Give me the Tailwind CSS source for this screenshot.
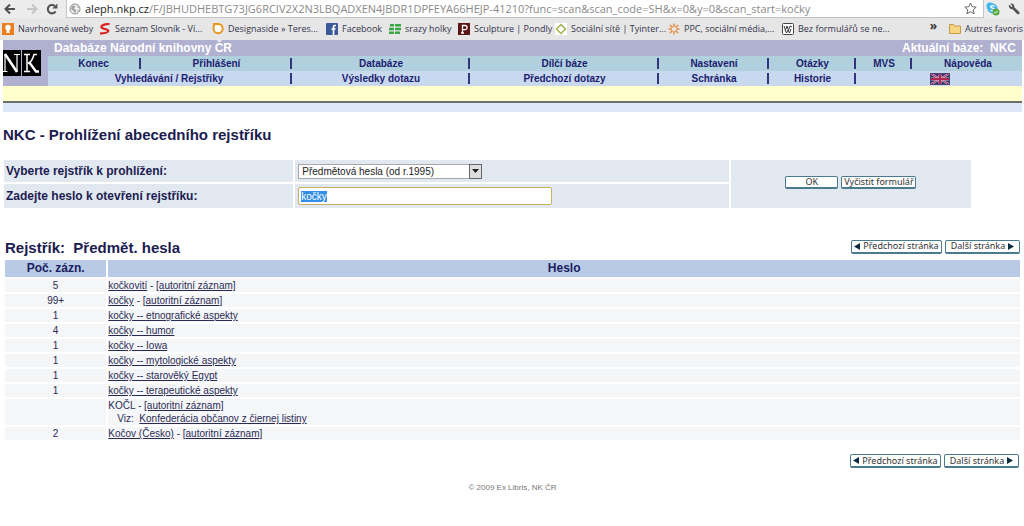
<!DOCTYPE html>
<html lang="cs">
<head>
<meta charset="utf-8">
<title>NKC - Prohlížení abecedního rejstříku</title>
<script src="https://cdn.jsdelivr.net/npm/@tailwindcss/browser@4"></script>
</head>
<body class="bg-white font-['Liberation_Sans',Arial,sans-serif] text-[10px] leading-3 text-[#2a2a55] overflow-x-hidden">

<!-- Browser toolbar -->
<header class="bg-[#e6e6e6] font-['Open_Sans','Noto_Sans',sans-serif]">
  <div class="flex h-[18px] items-center bg-[#ececec]">
    <button aria-label="Zpět" class="ml-1 w-[22px]"><svg class="size-3" viewBox="0 0 12 12" fill="none" stroke="#505050" stroke-width="2"><path d="M11 6H2M6 1.5 1.5 6 6 10.5"/></svg></button>
    <button aria-label="Vpřed" class="w-5"><svg class="size-3" viewBox="0 0 12 12" fill="none" stroke="#c4c4c4" stroke-width="2"><path d="M1 6h9M6 1.5 10.5 6 6 10.5"/></svg></button>
    <button aria-label="Obnovit" class="w-5"><svg class="size-3" viewBox="0 0 12 12"><path d="M9.600 8.400A4.200 4.200 0 1 1 8.800 3" fill="none" stroke="#505050" stroke-width="2"/><path d="M11.400.4v5H6.400z" fill="#505050"/></svg></button>
    <div class="flex h-[18px] min-w-0 flex-1 items-center border-x border-b border-[#c4c4c4] bg-white pl-[2px]">
      <svg class="size-3 shrink-0" viewBox="0 0 12 12"><circle cx="6" cy="6" r="5" fill="#f4f4f4" stroke="#8c8c8c"/><path d="M3 2.500 6.500 3 5 6l2.500 1L6 10.500 4.500 8 2 6zM8 2l2 2.500L8.500 5zM8 7.500l2-.5-1.500 2.500z" fill="#a4a4a4"/></svg>
      <p class="ml-1 min-w-0 flex-1 whitespace-nowrap text-[11px] leading-4 text-[#8a8a8a]"><span class="text-[#222]">aleph.nkp.cz</span>/F/JBHUDHEBTG73JG6RCIV2X2N3LBQADXEN4JBDR1DPFEYA66HEJP-41210?func=scan&amp;scan_code=SH&amp;x=0&amp;y=0&amp;scan_start=kočky</p>
      <button aria-label="Přidat záložku" class="mr-1.5"><svg class="size-[13px]" viewBox="0 0 13 13"><path d="m6.500 1 1.700 3.700 4 .4-3 2.700.9 4-3.600-2.100-3.600 2.100.9-4-3-2.700 4-.4z" fill="#fff" stroke="#666"/></svg></button>
    </div>
    <button aria-label="Skype" class="ml-0.5 w-[22px]"><svg class="size-[14px]" viewBox="0 0 14 14"><circle cx="4" cy="4" r="3.500" fill="#41b6e6"/><circle cx="6.500" cy="6.500" r="5" fill="#41b6e6"/><path d="M8.500 4.300C7 3 4.500 3.500 4.700 5s3.800 1 3.800 2.500S5.800 9.200 4.500 8" fill="none" stroke="#fff" stroke-width="1.300"/><circle cx="10" cy="10" r="3.500" fill="#5aa845"/><path d="m8.500 10 1 1.200 2-2.200" fill="none" stroke="#fff"/></svg></button>
    <button aria-label="Nastavení prohlížeče" class="w-4"><svg class="size-3" viewBox="0 0 12 12"><path d="M1 1.500 3.500 4 4.500 3 2.300.8C4.500 0 6.800 1.500 6.300 4.200l5 4.800c1 1.500-.8 3-2.200 2L4.600 6.200C2.500 6.800.2 4.500 1 1.500z" fill="#555"/></svg></button>
  </div>
  <nav aria-label="Záložky" class="flex h-[22px] items-center whitespace-nowrap text-[9px] text-[#34344c]">
    <a href="#" class="flex w-[96px] items-center gap-1 pl-[2px]"><svg class="size-3 shrink-0" viewBox="0 0 12 12"><rect width="12" height="12" fill="#ee7d1d"/><circle cx="6" cy="4.500" r="2.800" fill="#fff"/><path d="M4.500 6h3v4h-3z" fill="#fff"/></svg>Navrhované weby</a>
    <a href="#" class="flex w-[115px] items-center gap-1 pl-[3px]"><svg class="size-3 shrink-0" viewBox="0 0 12 12"><path d="M10.500 1C6 1 2 2.200 2.300 4.200S9.500 5.800 9.300 8 4.500 10.200 1 10.500" fill="none" stroke="#dc2020" stroke-width="2.200"/></svg>Seznam Slovník - Ví...</a>
    <a href="#" class="flex w-[113px] items-center gap-1 pl-[1px]"><svg class="size-3 shrink-0" viewBox="0 0 12 12"><path d="M2 1h4.500a4.600 4.600 0 1 1-5 5z" fill="#fff" stroke="#e8961e" stroke-width="2"/></svg>Designaside » Teres...</a>
    <a href="#" class="flex w-[63px] items-center gap-1 pl-[2px]"><svg class="size-3 shrink-0" viewBox="0 0 12 12"><rect width="12" height="12" rx="1" fill="#3b5998"/><path d="M10 2.500H8.800Q7.500 2.500 7.500 4v8M5.500 6h4" fill="none" stroke="#fff" stroke-width="1.700"/></svg>Facebook</a>
    <a href="#" class="flex w-[69px] items-center gap-1 pl-[2px]"><svg class="size-3 shrink-0" viewBox="0 0 12 12"><path d="M1 1h11v2.500H1zM0 4.700h12v2.500H0zM0 8.500h11V11H0z" fill="#3aa648"/><path d="M5.500 1v10" stroke="#e8f4e8"/></svg>srazy holky</a>
    <a href="#" class="flex w-[97px] items-center gap-1 pl-[2px]"><svg class="size-3 shrink-0" viewBox="0 0 12 12"><rect width="12" height="12" fill="#5c1414"/><path d="M4.500 10V2.500H7a2 2 0 0 1 0 4.200H4.500M3 10h3" fill="none" stroke="#fff" stroke-width="1.300"/></svg>Sculpture | Pondly</a>
    <a href="#" class="flex w-[113px] items-center gap-1 pl-[2px]"><svg class="size-3 shrink-0" viewBox="0 0 12 12"><rect width="12" height="12" fill="#fff"/><path d="m6 1.500 4.500 4.500L6 10.500 1.500 6z" fill="none" stroke="#a3b04c" stroke-width="1.500"/></svg>Sociální sítě | Tyinter...</a>
    <a href="#" class="flex w-[113px] items-center gap-1 pl-[2px]"><svg class="size-3 shrink-0" viewBox="0 0 12 12"><path d="M6 .5V4M6 8v3.500M.5 6H4M8 6h3.500M2 2l2.500 2.500M7.500 7.500 10 10M10 2 7.500 4.500M4.500 7.500 2 10" stroke="#e58a3c" stroke-width="1.500"/></svg>PPC, sociální média,...</a>
    <a href="#" class="flex items-center gap-1 pl-[3px]"><svg class="size-3 shrink-0" viewBox="0 0 12 12"><rect x=".5" y=".5" width="11" height="11" rx="1" fill="#fff" stroke="#444"/><path d="m2 3 1.500 4L5 3l1.500 4L8 3l2 1M3 7l1.500 3L6 7l1.500 3L9 6" fill="none" stroke="#333"/></svg>Bez formulářů se ne...</a>
    <button aria-label="Další záložky" class="ml-auto mr-3 pb-1.5 text-[12px] font-bold text-[#333]">»</button>
    <a href="#" class="flex items-center gap-1 pr-px"><svg class="size-3 shrink-0" viewBox="0 0 12 12"><path d="M.5 10.500v-9h4l1 1.500h6v7.500z" fill="#f6d583" stroke="#c49a45"/></svg>Autres favoris</a>
  </nav>
</header>

<div class="pl-[3px] pr-[2px]">
  <!-- Catalogue banner -->
  <div class="flex bg-[#b0b0d0]">
    <div class="w-[45px] shrink-0 pt-[10px]">
      <svg class="h-[26px] w-[38px]" viewBox="0 0 38 26" role="img" aria-label="NK"><path d="M0 0h18v26H0zM19 0h19v26H19z" fill="#000"/><g fill="none" stroke="#fff"><path d="M2 4v17M0 21.500h4.500M14 4v18M11 4.500h6" stroke-width="1.200"/><path d="m2 4 12 18" stroke-width="2.500"/><path d="M24 4v18M21 4.500h6M21 21.500h6M34 4.500h-3c-1 4-3.500 8-6 9" stroke-width="1.500"/><path d="m26 12 7 9.500h3" stroke-width="2.300"/></g></svg>
    </div>
    <div class="min-w-0 flex-1">
      <div class="flex h-4 items-center justify-between pl-1.5 pr-[6px] text-[12px] font-bold text-white"><span>Databáze Národní knihovny ČR</span><span>Aktuální báze:&nbsp; NKC</span></div>
      <nav aria-label="Hlavní nabídka" class="text-[10px] font-bold text-[#1c1c70]">
        <div class="grid h-[15px] grid-cols-[95fr_151fr_178fr_189fr_110fr_87fr_56fr_108fr] items-center bg-[#b0d0dd] text-center">
          <div class="flex items-center"><a href="#" class="flex-1">Konec</a><i class="mr-[2px] h-[11px] w-[2px] bg-[#34347c]"></i></div>
          <div class="flex items-center"><a href="#" class="flex-1">Přihlášení</a><i class="mr-[2px] h-[11px] w-[2px] bg-[#34347c]"></i></div>
          <div class="flex items-center"><a href="#" class="flex-1">Databáze</a><i class="mr-[2px] h-[11px] w-[2px] bg-[#34347c]"></i></div>
          <div class="flex items-center"><a href="#" class="flex-1">Dílčí báze</a><i class="mr-[2px] h-[11px] w-[2px] bg-[#34347c]"></i></div>
          <div class="flex items-center"><a href="#" class="flex-1">Nastavení</a><i class="mr-[2px] h-[11px] w-[2px] bg-[#34347c]"></i></div>
          <div class="flex items-center"><a href="#" class="flex-1">Otázky</a><i class="mr-[2px] h-[11px] w-[2px] bg-[#34347c]"></i></div>
          <div class="flex items-center"><a href="#" class="flex-1">MVS</a><i class="mr-[2px] h-[11px] w-[2px] bg-[#34347c]"></i></div>
          <a href="#">Nápověda</a>
        </div>
        <div class="grid h-[15px] grid-cols-[246fr_178fr_189fr_110fr_87fr_164fr] items-center bg-[#c8d8ee] text-center">
          <div class="flex items-center"><a href="#" class="flex-1">Vyhledávání / Rejstříky</a><i class="mr-[2px] h-[11px] w-[2px] bg-[#34347c]"></i></div>
          <div class="flex items-center"><a href="#" class="flex-1">Výsledky dotazu</a><i class="mr-[2px] h-[11px] w-[2px] bg-[#34347c]"></i></div>
          <div class="flex items-center"><a href="#" class="flex-1">Předchozí dotazy</a><i class="mr-[2px] h-[11px] w-[2px] bg-[#34347c]"></i></div>
          <div class="flex items-center"><a href="#" class="flex-1">Schránka</a><i class="mr-[2px] h-[11px] w-[2px] bg-[#34347c]"></i></div>
          <div class="flex items-center"><a href="#" class="flex-1">Historie</a><i class="mr-[2px] h-[11px] w-[2px] bg-[#34347c]"></i></div>
          <a href="#" aria-label="English" class="flex justify-center"><svg class="h-3 w-5" viewBox="0 0 20 12"><rect width="20" height="12" fill="#2c2c6c"/><path d="m0 0 20 12M20 0 0 12" stroke="#d8b8d0" stroke-width="2"/><path d="m0 0 20 12M20 0 0 12" stroke="#b03058"/><path d="M10 0v12M0 6h20" stroke="#d8b8d0" stroke-width="3"/><path d="M10 0v12M0 6h20" stroke="#b02850" stroke-width="2"/><path d="M.5.5h19v11H.5z" fill="none" stroke="#4c4474"/></svg></a>
        </div>
      </nav>
    </div>
  </div>
  <div class="h-[17px] border-b-2 border-[#6c706c] bg-[#ffffcc]"></div>
  <div class="h-[9px] bg-[#dce8f8]"></div>

  <main>
    <h1 class="mt-[15px] text-[15px] font-bold leading-4 text-[#1c1c50]">NKC - Prohlížení abecedního rejstříku</h1>

    <form class="mt-[17px] grid w-[95%] grid-cols-[289fr_433fr_240fr] gap-[2px] pl-px text-[12px]" onsubmit="return false">
      <label for="idx" class="flex h-[22px] items-center bg-[#e1e8f0] pl-0.5 font-bold text-[#1c1c50]">Vyberte rejstřík k prohlížení:</label>
      <div class="flex items-center bg-[#e1e8f0] pl-[3px]">
        <div class="relative h-[15px] w-[184px]">
          <select id="idx" class="block h-[15px] w-full appearance-none rounded-none border border-[#a8a8a8] bg-white pl-[3px] text-[10px] leading-[13px] text-[#222]"><option>Předmětová hesla (od r.1995)</option></select>
          <span class="pointer-events-none absolute right-0 top-0 flex h-[15px] w-[13px] items-center justify-center border border-[#666] bg-[#dedede]"><svg class="h-[4px] w-[7px]" viewBox="0 0 7 4"><path d="M0 0h7L3.500 4z" fill="#222"/></svg></span>
        </div>
      </div>
      <div class="row-span-2 flex items-center justify-center gap-[3px] bg-[#e1e8f0] pb-1 font-['Noto_Sans',sans-serif] text-[9px]">
        <button class="h-[13px] w-[53px] rounded-xs border border-b-2 border-[#4a7a8e] bg-white leading-[10px] text-[#333]">OK</button>
        <button type="reset" class="h-[13px] w-[75px] whitespace-nowrap rounded-xs border border-b-2 border-[#4a7a8e] bg-white leading-[10px] text-[#333]">Vyčistit formulář</button>
      </div>
      <label for="term" class="flex h-6 items-center bg-[#e1e8f0] pl-0.5 font-bold text-[#1c1c50]">Zadejte heslo k otevření rejstříku:</label>
      <div class="flex items-center bg-[#e1e8f0] pl-[3px]">
        <input id="term" type="text" value="kočky" autofocus onfocus="this.select()" class="h-[18px] w-[254px] rounded-xs border border-[#c8b060] bg-white px-[2px] text-[10px] text-[#222] outline-none selection:bg-[#3390e8] selection:text-white">
      </div>
    </form>

    <div class="mt-[29px] flex items-center justify-between pl-0.5">
      <h2 class="pt-[3px] text-[15px] font-bold leading-4 text-[#1c1c50]">Rejstřík:&nbsp; Předmět. hesla</h2>
      <div class="flex gap-[3px] pr-0.5 font-['Noto_Sans',sans-serif] text-[9px] text-[#333]">
        <button class="flex h-[14px] w-[91px] items-center justify-center gap-[3px] whitespace-nowrap rounded-xs border border-b-2 border-[#4a7a8e] bg-white leading-[10px]"><svg class="h-[7px] w-1.5 shrink-0" viewBox="0 0 6 7"><path d="M6 0v7L0 3.500z" fill="#0c2c40"/></svg>Předchozí stránka</button>
        <button class="flex h-[14px] w-[75px] items-center justify-center gap-[3px] whitespace-nowrap rounded-xs border border-b-2 border-[#4a7a8e] bg-white leading-[10px]">Další stránka<svg class="h-[7px] w-1.5 shrink-0" viewBox="0 0 6 7"><path d="M0 0v7l6-3.500z" fill="#0c2c40"/></svg></button>
      </div>
    </div>

    <table class="mt-[2px] w-full border-separate border-spacing-x-[2px] border-spacing-y-[2px] [&_a]:underline [&_td]:bg-[#f5f6f8] [&_td]:p-0 [&_td:first-child]:text-center">
      <thead>
        <tr class="bg-[#b8cae6] text-[12px] leading-[17px] text-[#1c1c60]"><th class="w-[10%]">Poč. zázn.</th><th>Heslo</th></tr>
      </thead>
      <tbody class="leading-[13px]">
        <tr><td>5</td><td><a href="#">kočkovití</a> - <a href="#">[autoritní záznam]</a></td></tr>
        <tr><td>99+</td><td><a href="#">kočky</a> - <a href="#">[autoritní záznam]</a></td></tr>
        <tr><td>1</td><td><a href="#">kočky -- etnografické aspekty</a></td></tr>
        <tr><td>4</td><td><a href="#">kočky -- humor</a></td></tr>
        <tr><td>1</td><td><a href="#">kočky -- Iowa</a></td></tr>
        <tr><td>1</td><td><a href="#">kočky -- mytologické aspekty</a></td></tr>
        <tr><td>1</td><td><a href="#">kočky -- starověký Egypt</a></td></tr>
        <tr><td>1</td><td><a href="#">kočky -- terapeutické aspekty</a></td></tr>
        <tr><td></td><td>KOČL - <a href="#">[autoritní záznam]</a><br><span class="pl-[9px]">Viz:&nbsp; <a href="#">Konfederácia občanov z čiernej listiny</a></span></td></tr>
        <tr><td>2</td><td><a href="#">Kočov (Česko)</a> - <a href="#">[autoritní záznam]</a></td></tr>
      </tbody>
    </table>

    <div class="mt-3 flex justify-end gap-[3px] pr-[3px] font-['Noto_Sans',sans-serif] text-[9px] text-[#333]">
      <button class="flex h-[14px] w-[91px] items-center justify-center gap-[3px] whitespace-nowrap rounded-xs border border-b-2 border-[#4a7a8e] bg-white leading-[10px]"><svg class="h-[7px] w-1.5 shrink-0" viewBox="0 0 6 7"><path d="M6 0v7L0 3.500z" fill="#0c2c40"/></svg>Předchozí stránka</button>
      <button class="flex h-[14px] w-[75px] items-center justify-center gap-[3px] whitespace-nowrap rounded-xs border border-b-2 border-[#4a7a8e] bg-white leading-[10px]">Další stránka<svg class="h-[7px] w-1.5 shrink-0" viewBox="0 0 6 7"><path d="M0 0v7l6-3.500z" fill="#0c2c40"/></svg></button>
    </div>
  </main>
  <footer class="mt-[14px] text-center text-[8px] text-[#777]">© 2009 Ex Libris, NK ČR</footer>
</div>
</body>
</html>
